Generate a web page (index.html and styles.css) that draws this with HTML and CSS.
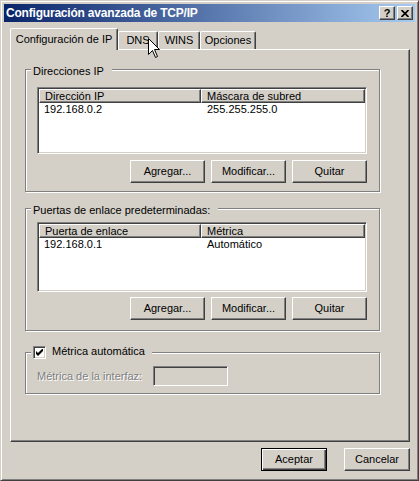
FILE: index.html
```html
<!DOCTYPE html>
<html lang="es">
<head>
    <meta charset="UTF-8">
    <meta name="viewport" content="width=device-width, initial-scale=1.0">
    <title>Configuración avanzada de TCP/IP</title>
    <link rel="stylesheet" href="styles.css">
</head>
<body>
    <div class="window">
        <div class="titlebar">
            <span class="title">Configuración avanzada de TCP/IP</span>
            <div class="caption-buttons">
                <button class="caption-btn">?</button>
                <button class="caption-btn">
                    <svg width="8" height="7" viewBox="0 0 8 7"><path d="M0.5 0 L7.5 7 M7.5 0 L0.5 7" stroke="#000" stroke-width="1.7"/></svg>
                </button>
            </div>
        </div>

        <div class="dialog">
            <div class="tabs">
                <div class="tab tab-ip active">Configuración de IP</div>
                <div class="tab tab-dns">DNS</div>
                <div class="tab tab-wins">WINS</div>
                <div class="tab tab-opts">Opciones</div>
            </div>

            <div class="panel">
                <div class="group group-ip">
                    <div class="group-title">Direcciones IP</div>
                    <div class="listview list-ip">
                        <div class="lv-head"><span>Dirección IP</span><span>Máscara de subred</span></div>
                        <div class="lv-row"><span>192.168.0.2</span><span>255.255.255.0</span></div>
                    </div>
                    <div class="btn-row">
                        <button class="btn">Agregar...</button>
                        <button class="btn">Modificar...</button>
                        <button class="btn">Quitar</button>
                    </div>
                </div>

                <div class="group group-gw">
                    <div class="group-title">Puertas de enlace predeterminadas:</div>
                    <div class="listview list-gw">
                        <div class="lv-head"><span>Puerta de enlace</span><span>Métrica</span></div>
                        <div class="lv-row"><span>192.168.0.1</span><span>Automático</span></div>
                    </div>
                    <div class="btn-row">
                        <button class="btn">Agregar...</button>
                        <button class="btn">Modificar...</button>
                        <button class="btn">Quitar</button>
                    </div>
                </div>

                <div class="group group-metric">
                    <div class="group-title check-title">
                        <span class="checkbox">
                            <svg width="7" height="7" viewBox="0 0 7 7"><path d="M0 2 L2 4 L7 -1 V2 L2 7 L0 5 Z" fill="#000"/></svg>
                        </span>
                        <span>Métrica automática</span>
                    </div>
                    <div class="metric-row">
                        <span class="metric-label">Métrica de la interfaz:</span>
                        <span class="textbox"></span>
                    </div>
                </div>
            </div>

            <div class="footer">
                <button class="btn btn-small btn-default">Aceptar</button>
                <button class="btn btn-small">Cancelar</button>
            </div>
        </div>

        <svg class="cursor" width="13" height="21" viewBox="0 0 13 21">
            <path d="M0.5 0.5 V16.5 L4.5 12.5 L7.5 19.5 L9.5 18.5 L6.5 11.5 H11.5 Z" fill="#fff" stroke="#000" stroke-width="1"/>
        </svg>
    </div>
</body>
</html>
```

FILE: styles.css
```css
body {
    margin: 0;
    font-family: "Liberation Sans", Arial, sans-serif;
    font-size: 11px;
    line-height: 13px;
    color: #000;
    background: #d4d0c8;
}
.window {
    position: relative;
    box-sizing: border-box;
    width: 419px;
    height: 481px;
    padding: 3px;
    background: #d4d0c8;
    border: 1px solid;
    border-color: #d4d0c8 #404040 #404040 #d4d0c8;
    box-shadow: inset 1px 1px #fff, inset -1px -1px #808080;
}

/* title bar */
.titlebar {
    height: 18px;
    display: flex;
    align-items: center;
    justify-content: space-between;
    padding: 0 2px;
    background: linear-gradient(to right, #0a246a, #a6caf0);
    color: #fff;
}
.title {
    font-weight: bold;
    font-size: 12px;
    letter-spacing: -0.2px;
}
.caption-buttons {
    display: flex;
    gap: 2px;
}
.caption-btn {
    box-sizing: border-box;
    width: 16px;
    height: 14px;
    padding: 0;
    display: flex;
    align-items: center;
    justify-content: center;
    font: bold 11px "Liberation Sans", Arial, sans-serif;
    color: #000;
    background: #d4d0c8;
    border: 1px solid;
    border-color: #fff #404040 #404040 #fff;
    box-shadow: inset -1px -1px #808080;
}

.dialog {
    padding: 6px 5px 0 6px;
}

/* tabs */
.tabs {
    display: flex;
    height: 22px;
    margin-bottom: -1px;
}
.tab {
    box-sizing: border-box;
    height: 18px;
    margin-top: 3px;
    padding-top: 2px;
    text-align: center;
    border: 1px solid;
    border-bottom: none;
    border-color: #fff #404040 #fff #fff;
    border-radius: 2px 2px 0 0;
    box-shadow: inset -1px 0 #808080;
}
.tab.active {
    position: relative;
    height: 22px;
    margin-top: 0;
    padding-top: 4px;
    background: #d4d0c8;
}
.tab-ip { width: 108px; }
.tab-dns { width: 40px; }
.tab-wins { width: 42px; }
.tab-opts { width: 56px; }

.panel {
    box-sizing: border-box;
    height: 393px;
    padding: 19px 0 0 14px;
    border: 1px solid;
    border-color: #fff #404040 #404040 #fff;
    box-shadow: inset -1px -1px #808080;
}

/* group boxes */
.group {
    box-sizing: border-box;
    width: 355px;
    padding: 0 0 8px 11px;
    border: 1px solid #808080;
    box-shadow: inset 1px 1px #fff, 1px 1px #fff;
}
.group-gw {
    margin-top: 16px;
    padding-bottom: 10px;
}
.group-metric {
    margin-top: 21px;
    padding-bottom: 7px;
}
.group-title {
    display: flex;
    width: max-content;
    margin: -5px 0 0 -6px;
    padding: 0 8px 0 2px;
    background: #d4d0c8;
}
.check-title {
    margin-top: -8px;
    padding-right: 7px;
    gap: 6px;
}
.checkbox {
    box-sizing: border-box;
    width: 13px;
    height: 13px;
    margin-top: 1px;
    display: flex;
    align-items: center;
    justify-content: center;
    background: #fff;
    border: 1px solid;
    border-color: #808080 #fff #fff #808080;
    box-shadow: inset 1px 1px #404040, inset -1px -1px #d4d0c8;
}

/* list views */
.listview {
    box-sizing: border-box;
    width: 330px;
    padding: 1px;
    background: #fff;
    border: 1px solid;
    border-color: #808080 #fff #fff #808080;
    box-shadow: inset 1px 1px #404040, inset -1px -1px #d4d0c8;
}
.list-ip {
    height: 67px;
    margin-top: 9px;
}
.list-gw {
    height: 70px;
    margin-top: 5px;
}
.lv-head, .lv-row {
    display: grid;
    grid-template-columns: 162px 164px;
}
.lv-head span {
    box-sizing: border-box;
    height: 14px;
    line-height: 12px;
    padding-left: 5px;
    background: #d4d0c8;
    border: 1px solid;
    border-color: #fff #404040 #404040 #fff;
    box-shadow: inset -1px -1px #808080;
}
.lv-row span {
    padding-left: 5px;
}
.lv-row span + span {
    padding-left: 6px;
}

/* buttons */
.btn-row {
    display: flex;
    justify-content: flex-end;
    gap: 6px;
    width: 330px;
    margin-top: 6px;
}
.group-gw .btn-row {
    margin-top: 5px;
}
.btn {
    box-sizing: border-box;
    width: 75px;
    height: 23px;
    padding: 0;
    font: inherit;
    color: #000;
    background: #d4d0c8;
    border: 1px solid;
    border-color: #fff #404040 #404040 #fff;
    box-shadow: inset -1px -1px #808080;
}
.btn-small {
    width: 66px;
}
.btn-default {
    border-color: #000;
    box-shadow: inset 1px 1px #fff, inset -1px -1px #404040, inset -2px -2px #808080;
}

.metric-row {
    display: flex;
    align-items: center;
    margin-top: 7px;
}
.metric-label {
    width: 116px;
    color: #808080;
    text-shadow: 1px 1px #fff;
}
.textbox {
    box-sizing: border-box;
    width: 75px;
    height: 20px;
    background: #d4d0c8;
    border: 1px solid;
    border-color: #808080 #fff #fff #808080;
    box-shadow: inset 1px 1px #404040, inset -1px -1px #d4d0c8;
}

.footer {
    display: flex;
    justify-content: flex-end;
    gap: 17px;
    margin-top: 6px;
}

.cursor {
    position: absolute;
    left: 147px;
    top: 37px;
}
```
